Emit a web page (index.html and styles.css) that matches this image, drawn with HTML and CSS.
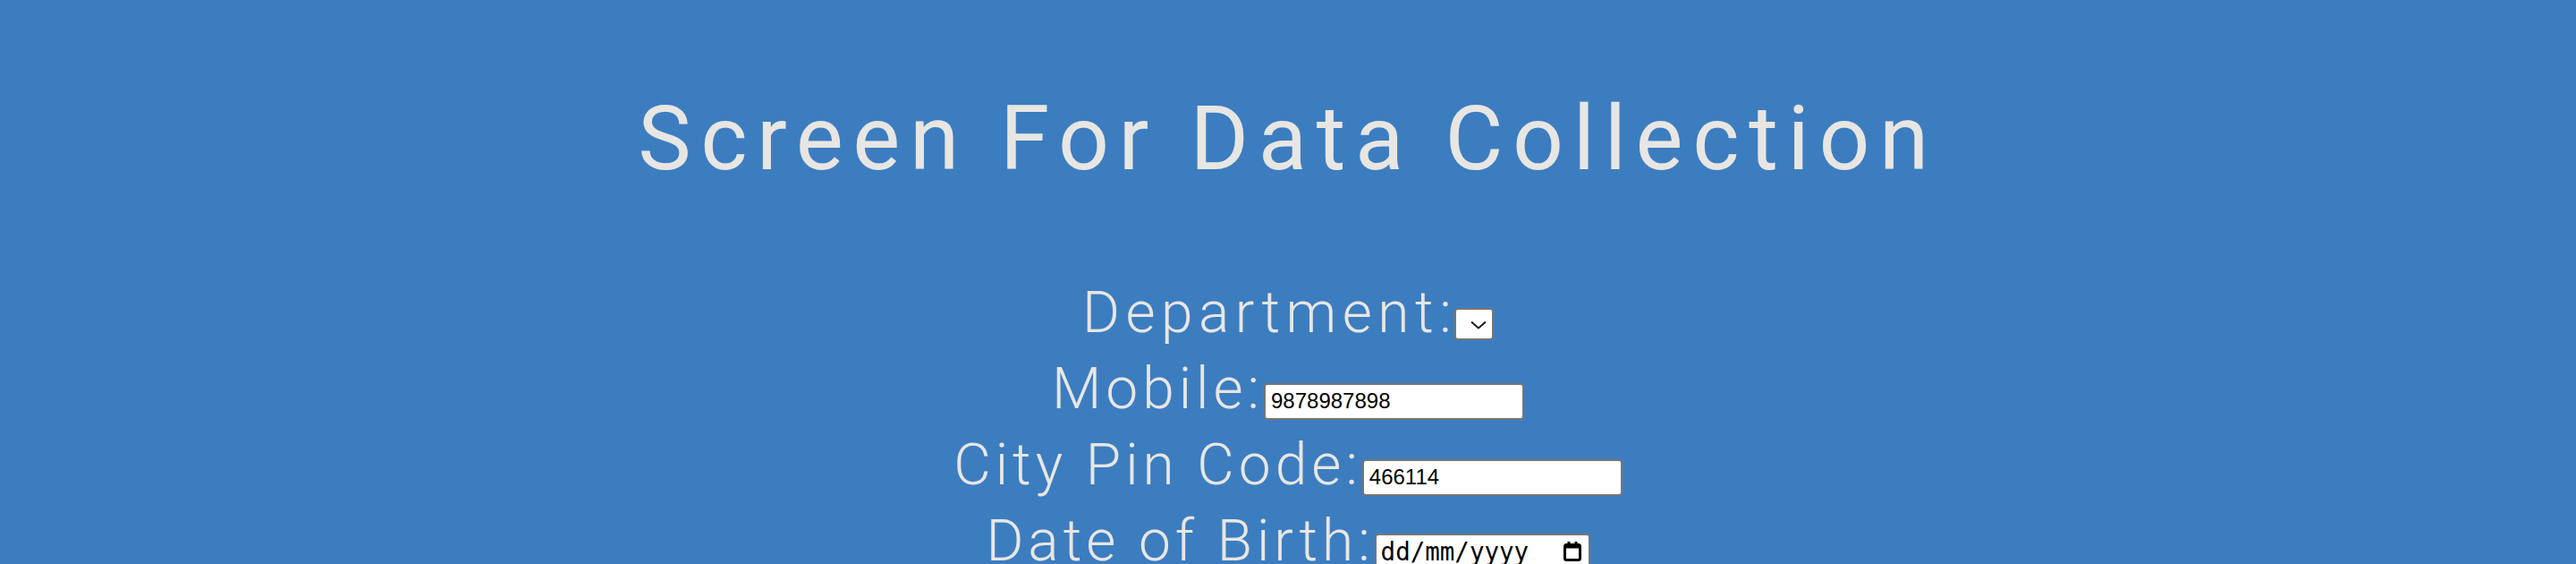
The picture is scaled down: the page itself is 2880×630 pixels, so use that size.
FILE: index.html
```html
<!DOCTYPE html>
<html lang="en">
<head>
<meta charset="utf-8">
<title>Screen For Data Collection</title>
<link rel="stylesheet" href="styles.css">
</head>
<body>
<main class="page">
  <h1 class="title">Screen For Data Collection</h1>
  <form class="form">
    <div class="row"><label class="label label-wide" for="dept">Department:</label><span class="select-wrap"><select class="select" id="dept" name="dept"></select><svg class="chevron" width="18" height="10" viewBox="0 0 18 10"><path d="M1 1.5 L9 8.5 L17 1.5" fill="none" stroke="#1a1a1a" stroke-width="2"/></svg></span></div>
    <div class="row"><label class="label" for="mobile">Mobile:</label><input class="field" type="text" id="mobile" name="mobile" value="9878987898"></div>
    <div class="row"><label class="label" for="pin">City Pin Code:</label><input class="field" type="text" id="pin" name="pin" value="466114"></div>
    <div class="row"><label class="label" for="dob">Date of Birth:</label><span class="date-field"><input class="date-input" type="text" id="dob" name="dob" placeholder="dd/mm/yyyy"><svg class="cal" width="20" height="22" viewBox="0 0 20 22"><rect x="1.5" y="3.5" width="17" height="17" rx="2" fill="none" stroke="#000" stroke-width="3"/><rect x="1.5" y="3.5" width="17" height="4" fill="#000"/><rect x="4.5" y="0" width="3" height="5" fill="#000"/><rect x="12.5" y="0" width="3" height="5" fill="#000"/></svg></span></div>
  </form>
</main>
</body>
</html>
```

FILE: styles.css
```css
html, body {
  margin: 0;
  padding: 0;
}

body {
  background: #3c7dc0;
  color: #e8e6e3;
  font-family: Roboto, "Liberation Sans", sans-serif;
  height: 630px;
  overflow: hidden;
}

.page {
  display: flex;
  flex-direction: column;
  align-items: center;
  padding-top: 105px;
}

.title {
  margin: 0;
  font-size: 100px;
  line-height: 100px;
  font-weight: 400;
  letter-spacing: 10.6px;
  text-align: center;
}

.form {
  margin-top: 102px;
  display: flex;
  flex-direction: column;
  align-items: center;
}

.row {
  line-height: 85px;
  height: 85px;
  white-space: nowrap;
  text-align: center;
}

.label {
  font-size: 64px;
  font-weight: 300;
  letter-spacing: 5px;
}

.label-wide {
  letter-spacing: 6.5px;
}

.select-wrap {
  position: relative;
  display: inline-block;
  height: 36px;
  overflow: hidden;
  vertical-align: -9px;
  margin-left: -3px;
}

.select {
  display: block;
  box-sizing: border-box;
  width: 44px;
  height: 36px;
  margin: 0;
  border: 2px solid #767676;
  border-radius: 4px;
  background: #fff;
  appearance: none;
  -webkit-appearance: none;
}

.chevron {
  position: absolute;
  left: 18px;
  top: 14px;
}

.field {
  box-sizing: border-box;
  width: 291px;
  height: 41px;
  margin: 0;
  font-family: "Liberation Sans", Arial, sans-serif;
  font-size: 24px;
  color: #000;
  background: #fff;
  border: 2px solid #767676;
  border-radius: 4px;
  padding: 2px 6px;
  vertical-align: baseline;
}

.date-field {
  box-sizing: border-box;
  display: inline-flex;
  align-items: center;
  width: 241px;
  height: 41px;
  background: #fff;
  border: 2px solid #767676;
  border-radius: 4px;
  padding: 0 8px 0 5px;
  vertical-align: baseline;
  line-height: normal;
}

.date-input {
  flex: 1;
  min-width: 0;
  border: none;
  outline: none;
  padding: 0;
  margin: 0;
  background: transparent;
  font-family: "DejaVu Sans Mono", "Liberation Mono", monospace;
  font-size: 27.5px;
  color: #000;
}

.date-input::placeholder {
  color: #000;
  opacity: 1;
}

.cal {
  flex: none;
}
```
